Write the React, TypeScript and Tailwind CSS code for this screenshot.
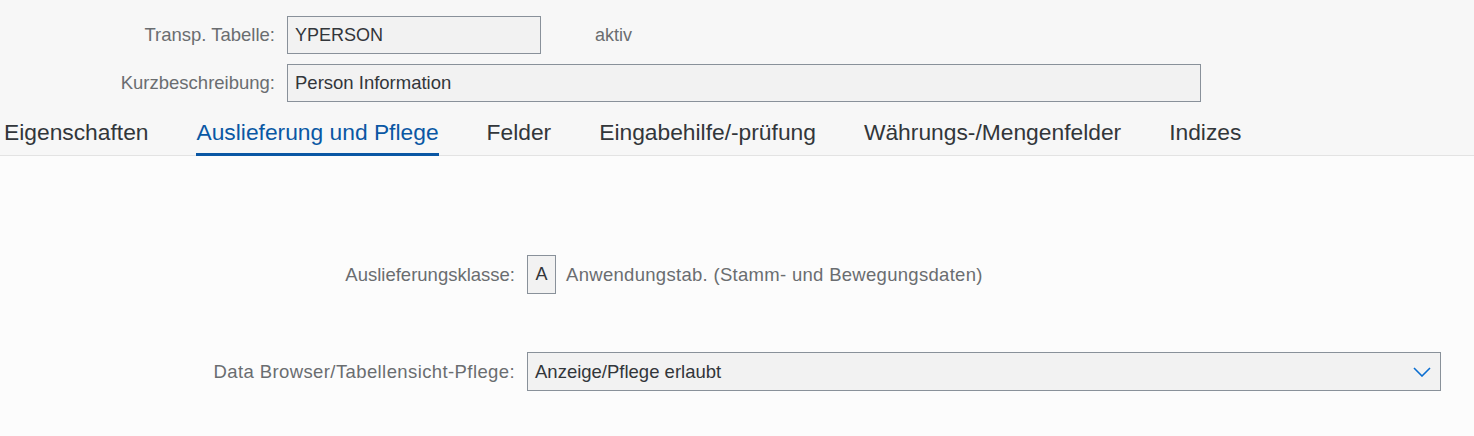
import React from "react";

const tabs = [
    "Eigenschaften",
    "Auslieferung und Pflege",
    "Felder",
    "Eingabehilfe/-prüfung",
    "Währungs-/Mengenfelder",
    "Indizes",
];

export default function App() {
    return (
        <div className="w-[1474px] h-[436px] overflow-hidden bg-[#fcfcfc] font-['Liberation_Sans',Arial,sans-serif]">
            {/* header */}
            <div className="bg-[#f7f7f7] pt-4">
                <div className="flex items-center">
                    <div className="w-[275px] text-right text-[18.5px] text-[#6a6d70]">Transp. Tabelle:</div>
                    <div className="ml-3 w-[254px] h-[38px] flex items-center px-[7px] bg-[#f2f2f2] border border-[#89919a] text-[18px] text-[#32363a]">YPERSON</div>
                    <div className="ml-[54px] text-[18px] text-[#6a6d70]">aktiv</div>
                </div>
                <div className="flex items-center mt-[10px]">
                    <div className="w-[275px] text-right text-[18.5px] text-[#6a6d70]">Kurzbeschreibung:</div>
                    <div className="ml-3 w-[914px] h-[38px] flex items-center px-[7px] bg-[#f2f2f2] border border-[#89919a] text-[18.5px] text-[#32363a]">Person Information</div>
                </div>
                <div className="h-[54px] flex gap-[48px] pl-1 border-b border-[#e3e3e3]">
                    {tabs.map((t, i) => (
                        <div
                            key={t}
                            className={
                                i === 1
                                    ? "h-[54px] flex items-center pt-[10px] border-b-[3px] border-[#0a57a4] text-[22.8px] text-[#0a57a4]"
                                    : "h-[54px] flex items-center pt-[10px] border-b-[3px] border-transparent text-[22.8px] text-[#32363a]"
                            }
                        >
                            {t}
                        </div>
                    ))}
                </div>
            </div>

            {/* content */}
            <div className="pt-[99px]">
                <div className="flex items-center">
                    <div className="w-[515px] text-right text-[18.5px] text-[#6a6d70]">Auslieferungsklasse:</div>
                    <div className="ml-3 w-[29px] h-[39px] flex items-center justify-center bg-[#f2f2f2] border border-[#89919a] text-[18px] text-[#32363a]">A</div>
                    <div className="ml-[10px] text-[18.5px] tracking-[0.3px] text-[#6a6d70]">Anwendungstab. (Stamm- und Bewegungsdaten)</div>
                </div>
                <div className="flex items-center mt-[58px]">
                    <div className="w-[515px] text-right text-[18.5px] tracking-[0.4px] text-[#6a6d70]">Data Browser/Tabellensicht-Pflege:</div>
                    <div className="ml-3 w-[914px] h-[39px] flex items-center justify-between pl-[7px] pr-[9px] bg-[#f2f2f2] border border-[#89919a] text-[18.5px] text-[#32363a]">
                        <span>Anzeige/Pflege erlaubt</span>
                        <svg width="18" height="10" viewBox="0 0 18 10" fill="none">
                            <polyline points="1,1 9,9 17,1" stroke="#0a6ed1" strokeWidth="1.6" />
                        </svg>
                    </div>
                </div>
            </div>
        </div>
    );
}
